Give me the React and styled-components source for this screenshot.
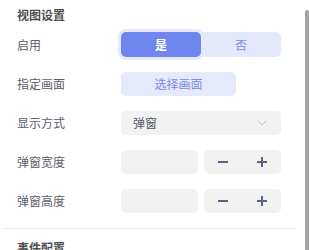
import React from "react";
import styled, { createGlobalStyle } from "styled-components";

const Global = createGlobalStyle`
  html, body { margin: 0; padding: 0; background: #fff; }
  body { font-family: "Noto Sans CJK SC", "Noto Sans", sans-serif; font-size: 12px; }
`;

const Panel = styled.div`
  position: relative;
  width: 309px;
  height: 250px;
  overflow: hidden;
  box-sizing: border-box;
  padding: 0 14px 0 3px;
`;

const Section = styled.section`
  padding: 0 0 0 14px;
`;

const Title = styled.div`
  height: 25px;
  padding-top: ${(p) => p.$top}px;
  box-sizing: border-box;
  line-height: 14px;
  font-size: 12px;
  font-weight: 600;
  color: #4e4e4e;
`;

const Rows = styled.div`
  display: grid;
  grid-template-rows: repeat(5, 39px);
`;

const Row = styled.div`
  display: grid;
  grid-template-columns: 104px 160px;
  align-items: center;
`;

const Label = styled.span`
  color: #5c606c;
  font-size: 12px;
`;

const Toggle = styled.div`
  display: flex;
  height: 25px;
  background: #e4e8fb;
  border-radius: 5px;
`;

const ToggleBtn = styled.div`
  flex: 1;
  display: flex;
  align-items: center;
  justify-content: center;
  border-radius: 5px;
  font-size: 12px;
  background: ${(p) => (p.$active ? "#6e86ee" : "transparent")};
  color: ${(p) => (p.$active ? "#fff" : "#7c8de8")};
  font-weight: ${(p) => (p.$active ? 600 : 400)};
  box-shadow: ${(p) => (p.$active ? "0 0 0 3px #e7eafa" : "none")};
`;

const PickBtn = styled.div`
  width: 115px;
  height: 24px;
  display: flex;
  align-items: center;
  justify-content: center;
  background: #e5e9fb;
  color: #7c8de8;
  border-radius: 5px;
  font-size: 12px;
`;

const Select = styled.div`
  height: 24px;
  display: flex;
  align-items: center;
  justify-content: space-between;
  padding: 0 14px 0 12px;
  background: #f2f2f3;
  border-radius: 5px;
  color: #555a66;
  font-size: 12px;
`;

const Pair = styled.div`
  display: grid;
  grid-template-columns: 77px 77px;
  gap: 6px;
`;

const Input = styled.div`
  height: 24px;
  background: #f2f2f3;
  border-radius: 5px;
`;

const Stepper = styled.div`
  height: 24px;
  background: #f2f2f3;
  border-radius: 5px;
  display: flex;
`;

const StepBtn = styled.div`
  flex: 1;
  display: flex;
  align-items: center;
  justify-content: center;
`;

const Divider = styled.hr`
  margin: 8px 0 0 0;
  border: none;
  border-top: 1px solid #ececee;
  height: 0;
`;

const Thumb = styled.div`
  position: absolute;
  right: 0;
  top: 10px;
  width: 4px;
  height: 260px;
  background: #a4a4a4;
  border-radius: 2px 2px 0 0;
`;

const Minus = () => (
  <svg width="12" height="12" viewBox="0 0 12 12">
    <rect x="1" y="5" width="10" height="2" fill="#5a6285" />
  </svg>
);
const Plus = () => (
  <svg width="12" height="12" viewBox="0 0 12 12">
    <rect x="1" y="5" width="10" height="2" fill="#5a6285" />
    <rect x="5" y="1" width="2" height="10" fill="#5a6285" />
  </svg>
);
const Chevron = () => (
  <svg width="10" height="6" viewBox="0 0 10 6">
    <path d="M0.5 0.5 L5 5 L9.5 0.5" fill="none" stroke="#c4c4c8" strokeWidth="1" />
  </svg>
);

const NumberRow = ({ label }) => (
  <Row>
    <Label>{label}</Label>
    <Pair>
      <Input />
      <Stepper>
        <StepBtn><Minus /></StepBtn>
        <StepBtn><Plus /></StepBtn>
      </Stepper>
    </Pair>
  </Row>
);

export default function App() {
  return (
    <>
      <Global />
      <Panel>
        <Section>
          <Title $top={8}>视图设置</Title>
          <Rows>
            <Row>
              <Label>启用</Label>
              <Toggle>
                <ToggleBtn $active>是</ToggleBtn>
                <ToggleBtn>否</ToggleBtn>
              </Toggle>
            </Row>
            <Row>
              <Label>指定画面</Label>
              <PickBtn>选择画面</PickBtn>
            </Row>
            <Row>
              <Label>显示方式</Label>
              <Select>
                <span>弹窗</span>
                <Chevron />
              </Select>
            </Row>
            <NumberRow label="弹窗宽度" />
            <NumberRow label="弹窗高度" />
          </Rows>
        </Section>
        <Divider />
        <Section>
          <Title $top={12}>事件配置</Title>
        </Section>
        <Thumb />
      </Panel>
    </>
  );
}
